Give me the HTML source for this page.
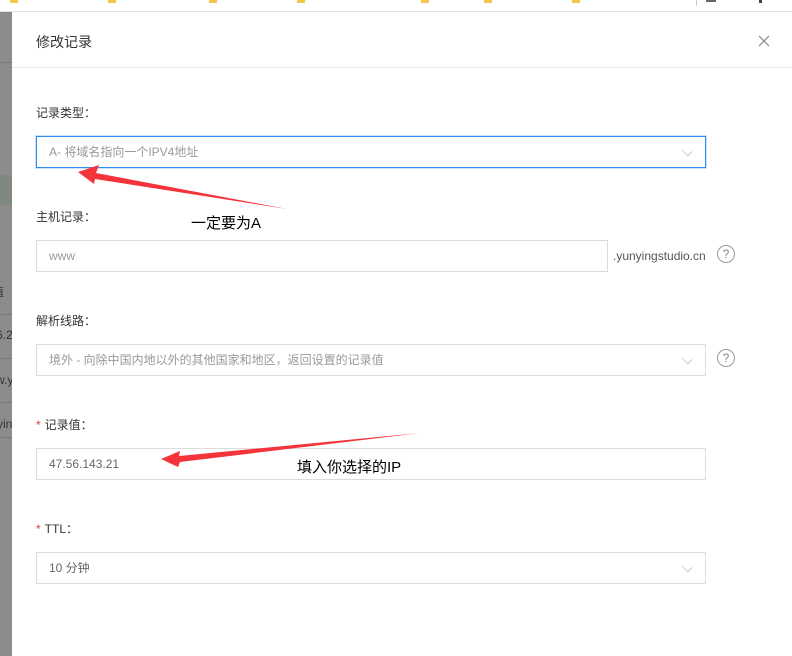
<!DOCTYPE html>
<html><head><meta charset="utf-8"><style>
*{box-sizing:border-box;margin:0;padding:0}
body{width:792px;height:656px;overflow:hidden;background:#fff;font-family:"Liberation Sans","Noto Sans CJK SC",sans-serif;position:relative}
.abs{position:absolute}
.lbl{position:absolute;left:36px;font-size:12px;color:#333}
.star{color:#e4393c;margin-right:4px}
.inp{position:absolute;left:36px;height:32px;border:1px solid #dcdcdc;font-size:12px;color:#999;padding-left:12px;line-height:30px;background:#fff}
.chev{position:absolute;right:14px;top:10px;width:8px;height:8px;border-right:1px solid #c8c8c8;border-bottom:1px solid #c8c8c8;transform:rotate(45deg) scale(1.1,.8)}
.q{position:absolute;width:18px;height:18px;border:1.3px solid #999;border-radius:50%;font-size:12px;color:#888;text-align:center;line-height:16px}
.m{position:absolute;top:0;width:8px;height:3px;background:#f2c94c}
.sl{position:absolute;left:0;font-size:12px;color:#444}
</style></head><body>
<div class="abs" style="left:0;top:0;width:792px;height:12px;background:#fff;border-bottom:1px solid #e2e2e2"></div>
<div class="m" style="left:10px"></div><div class="m" style="left:108px"></div><div class="m" style="left:209px"></div><div class="m" style="left:297px"></div><div class="m" style="left:421px"></div><div class="m" style="left:484px"></div><div class="m" style="left:572px"></div>
<div class="abs" style="left:696px;top:0;width:1px;height:6px;background:#ccc"></div>
<div class="abs" style="left:706px;top:0;width:10px;height:2px;background:#666"></div>
<div class="abs" style="left:759px;top:0;width:3px;height:3px;background:#345"></div>
<div class="abs" style="left:0;top:12px;width:12px;height:644px;background:#8c8c8c"></div>
<div class="abs" style="left:0;top:62px;width:12px;height:1px;background:#7a7a7a"></div>
<div class="abs" style="left:0;top:175px;width:12px;height:30px;background:#7f887f"></div>
<div class="abs" style="left:0;top:314px;width:12px;height:1px;background:#7a7a7a"></div>
<div class="abs" style="left:0;top:358px;width:12px;height:1px;background:#7a7a7a"></div>
<div class="abs" style="left:0;top:402px;width:12px;height:1px;background:#7a7a7a"></div>
<div class="abs" style="left:0;top:437px;width:12px;height:1px;background:#7a7a7a"></div>
<div class="abs" style="left:0;top:280px;width:12px;height:20px;overflow:hidden"><span class="sl" style="left:-8px;top:3px;color:#333">值</span></div>
<div class="abs" style="left:0;top:325px;width:12px;height:20px;overflow:hidden"><span class="sl" style="left:-4px;top:3px;color:#333">6.2</span></div>
<div class="abs" style="left:0;top:370px;width:12px;height:20px;overflow:hidden"><span class="sl" style="left:-4px;top:3px;color:#333">w.y</span></div>
<div class="abs" style="left:0;top:414px;width:12px;height:20px;overflow:hidden"><span class="sl" style="left:-3px;top:3px;color:#333">yin</span></div>
<div class="abs" style="left:12px;top:12px;width:780px;height:644px;background:#fff"></div>
<div class="abs" style="left:36px;top:32px;font-size:14px;color:#333">修改记录</div>
<svg class="abs" style="left:758px;top:35px" width="12" height="12"><path d="M1 1L11 11M11 1L1 11" stroke="#888" stroke-width="1.2"/></svg>
<div class="abs" style="left:12px;top:67px;width:780px;height:1px;background:#e8e8e8"></div>

<div class="lbl" style="top:104px">记录类型：</div>
<div class="inp" style="top:136px;width:670px;border-color:#2d8cf0;box-shadow:0 0 0 1px #cfe3f7">A- 将域名指向一个IPV4地址<span class="chev"></span></div>

<div class="lbl" style="top:208px">主机记录：</div>
<div class="inp" style="top:240px;width:572px">www</div>
<div class="abs" style="left:613px;top:249px;font-size:12px;color:#555">.yunyingstudio.cn</div>
<div class="q" style="left:717px;top:245px">?</div>

<div class="lbl" style="top:312px">解析线路：</div>
<div class="inp" style="top:344px;width:670px">境外 - 向除中国内地以外的其他国家和地区，返回设置的记录值<span class="chev"></span></div>
<div class="q" style="left:717px;top:349px">?</div>

<div class="lbl" style="top:416px"><span class="star">*</span>记录值：</div>
<div class="inp" style="top:448px;width:670px;color:#666">47.56.143.21</div>

<div class="lbl" style="top:520px"><span class="star">*</span>TTL：</div>
<div class="inp" style="top:552px;width:670px;color:#666">10 分钟<span class="chev"></span></div>

<div class="abs" style="left:191px;top:212px;font-size:15px;color:#000">一定要为A</div>
<div class="abs" style="left:297px;top:456px;font-size:15px;color:#000">填入你选择的IP</div>

<svg class="abs" style="left:0;top:0" width="792" height="656">
<polygon points="78,172 99,165 96,173 287,209 95,179 94,184" fill="#f5333a"/>
<polygon points="161,459 180,451 179,456 420,433 180,462 178,467" fill="#f5333a"/>
</svg>
</body></html>
